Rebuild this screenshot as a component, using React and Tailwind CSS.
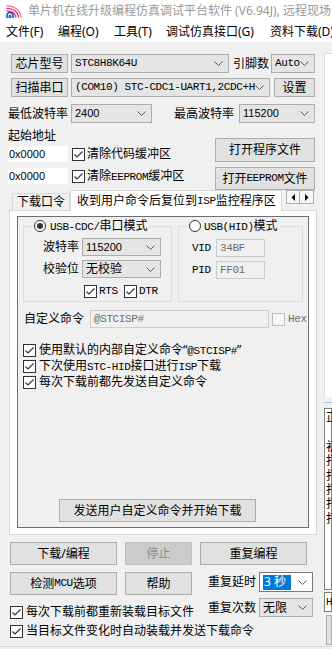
import React from "react";

const CJK = "font-['Noto_Sans','Noto_Sans_CJK_SC',sans-serif]";

function M({ children, className = "" }) {
  return (
    <span className={"font-['Liberation_Mono','Noto_Sans_CJK_SC',monospace] text-[11px] tracking-[-0.4px] " + className}>
      {children}
    </span>
  );
}

function S({ children, className = "" }) {
  return <span className={"font-['Liberation_Sans',sans-serif] text-[11px] " + className}>{children}</span>;
}

function Chev({ color = "#5a5a5a" }) {
  return (
    <svg width="9" height="5" viewBox="0 0 9 5" className="shrink-0">
      <path d="M0.5 0.5L4.5 4.5L8.5 0.5" fill="none" stroke={color} strokeWidth="1" />
    </svg>
  );
}

function Sel({ w, children, white }) {
  return (
    <div
      className={`${w} h-full shrink-0 flex items-center border pl-[3px] pr-[5px] ${
        white ? "bg-white border-[#7a7a7a]" : "bg-[#e5e5e5] border-[#acacac]"
      }`}
    >
      <div className="flex-1 min-w-0 overflow-hidden whitespace-nowrap flex items-center">{children}</div>
      <Chev />
    </div>
  );
}

function Btn({ w, h = "h-full", children, disabled }) {
  return (
    <div
      className={`${w} ${h} shrink-0 flex items-center justify-center border whitespace-nowrap ${
        disabled ? "bg-[#cccccc] border-[#bfbfbf] text-[#8a8a8a]" : "bg-[#e1e1e1] border-[#adadad]"
      }`}
    >
      {children}
    </div>
  );
}

function Check({ checked = true, disabled }) {
  return (
    <span
      className={`w-[13px] h-[13px] shrink-0 border flex items-center justify-center ${
        disabled ? "border-[#bcbcbc] bg-[#f7f7f7]" : "border-[#333333] bg-white"
      }`}
    >
      {checked && (
        <svg width="11" height="11" viewBox="0 0 11 11">
          <path d="M1.5 5.5L4 8L9.5 2.5" fill="none" stroke="#333333" strokeWidth="1.2" />
        </svg>
      )}
    </span>
  );
}

function Radio({ checked }) {
  return (
    <span className="w-[12px] h-[12px] shrink-0 rounded-full border border-[#333333] bg-white flex items-center justify-center">
      {checked && <span className="w-[6px] h-[6px] rounded-full bg-[#333333]" />}
    </span>
  );
}

function Logo() {
  return (
    <svg width="16" height="13" viewBox="0 0 16 13" className="shrink-0">
      <path d="M0.5 0.8A14 12 0 0 1 15 12.5" fill="none" stroke="#f06a8e" strokeWidth="1.3" />
      <path d="M0.5 3.3A11.5 9.5 0 0 1 12.5 12.5" fill="none" stroke="#e8305a" strokeWidth="1.3" />
      <path d="M0.5 5.8A9 7 0 0 1 10 12.5" fill="none" stroke="#e8305a" strokeWidth="1.3" />
      <path d="M1 13V10.5A3 3 0 0 1 7 10.5V13" fill="none" stroke="#1a4fd6" strokeWidth="1.6" />
      <path d="M3.2 13V11.3A0.8 0.8 0 0 1 4.8 11.3V13" fill="none" stroke="#1a4fd6" strokeWidth="1.3" />
    </svg>
  );
}

function CheckRow({ children, className = "" }) {
  return (
    <div className={"h-[16px] flex items-center whitespace-nowrap " + className}>
      <Check />
      <span className="ml-[3px]">{children}</span>
    </div>
  );
}

function RightStrip() {
  return (
    <div className="flex-1 min-w-0 flex flex-col pl-[2px] overflow-hidden">
      <div className="mt-[11px] h-[344px] shrink-0 bg-white border-l border-t border-[#dcdcdc]" />
      <div className="mt-[5px] h-[1px] shrink-0 bg-[#9fcbee]" />
      <div className="mt-[5px] h-[182px] shrink-0 bg-white border border-[#828282] pl-[1px] pt-[1px] whitespace-nowrap leading-[14.4px] text-[12px] font-['Noto_Sans_CJK_SC',sans-serif]">
        <div>正在检测目标单片机</div>
        <div>&nbsp;</div>
        <div>初始化</div>
        <div>打开</div>
        <div>打开</div>
        <div>打开</div>
        <div>打开</div>
        <div>打开</div>
      </div>
      <div className="mt-[2px] h-[20px] shrink-0 bg-white border border-[#7a7a7a] flex items-center pl-[1px]">
        <M>HEX</M>
      </div>
      <div className="mt-[3px] ml-[2px] h-[30px] shrink-0 bg-[#e1e1e1] border border-[#adadad]" />
    </div>
  );
}

export default function App() {
  return (
    <div className={`w-[332px] h-[649px] overflow-hidden bg-[#f0f0f0] flex flex-col text-[12px] text-black ${CJK}`}>
      {/* title bar */}
      <div className="h-[22px] shrink-0 bg-white flex items-center pl-[6px] whitespace-nowrap overflow-hidden">
        <Logo />
        <span className="ml-[6px] text-[#999999] text-[12px]">单片机在线升级编程仿真调试平台软件 (V6.94J), 远程现场</span>
      </div>
      {/* menu bar */}
      <div className="h-[20px] shrink-0 bg-white flex items-center pl-[6px] whitespace-nowrap overflow-hidden">
        <span className="w-[52px] shrink-0">文件(F)</span>
        <span className="w-[56px] shrink-0">编程(O)</span>
        <span className="w-[52px] shrink-0">工具(T)</span>
        <span className="w-[104px] shrink-0">调试仿真接口(G)</span>
        <span className="shrink-0">资料下载(D)</span>
      </div>

      <div className="flex flex-1 min-h-0">
        <div className="w-[322px] shrink-0 flex flex-col">
          {/* row 1 */}
          <div className="mt-[12px] h-[19px] flex items-center pl-[11px]">
            <Btn w="w-[57px]">芯片型号</Btn>
            <Sel w="w-[158px] ml-[3px]">
              <M>STC8H8K64U</M>
            </Sel>
            <span className="ml-[4px] w-[38px] shrink-0">引脚数</span>
            <Sel w="w-[44px]">
              <M>Auto</M>
            </Sel>
          </div>
          {/* row 2 */}
          <div className="mt-[5px] h-[19px] flex items-center pl-[11px]">
            <Btn w="w-[57px]">扫描串口</Btn>
            <Sel w="w-[199px] ml-[3px]">
              <M>(COM10) STC-CDC1-UART1,2CDC+HC</M>
            </Sel>
            <div className="ml-[4px] h-full flex">
              <Btn w="w-[41px]">设置</Btn>
            </div>
          </div>
          {/* row 3 */}
          <div className="mt-[7px] h-[19px] flex items-center pl-[8px]">
            <span className="w-[63px] shrink-0">最低波特率</span>
            <Sel w="w-[81px]">
              <S>2400</S>
            </Sel>
            <span className="ml-[22px] w-[65px] shrink-0">最高波特率</span>
            <Sel w="w-[76px]">
              <S>115200</S>
            </Sel>
          </div>
          {/* address block */}
          <div className="flex pl-[8px]">
            <div className="w-[207px] shrink-0 flex flex-col">
              <div className="mt-[5px] h-[16px] leading-[16px]">起始地址</div>
              <div className="mt-[2px] h-[16px] flex items-center whitespace-nowrap">
                <div className="w-[60px] h-full bg-white flex items-center pl-[1px]">
                  <S>0x0000</S>
                </div>
                <span className="ml-[4px]">
                  <Check />
                </span>
                <span className="ml-[2px]">清除代码缓冲区</span>
              </div>
              <div className="mt-[6px] h-[16px] flex items-center whitespace-nowrap">
                <div className="w-[60px] h-full bg-white flex items-center pl-[1px]">
                  <S>0x0000</S>
                </div>
                <span className="ml-[4px]">
                  <Check />
                </span>
                <span className="ml-[2px]">
                  清除<M>EEPROM</M>缓冲区
                </span>
              </div>
            </div>
            <div className="flex flex-col">
              <div className="mt-[15px] flex">
                <Btn w="w-[100px]" h="h-[24px]">打开程序文件</Btn>
              </div>
              <div className="mt-[5px] flex">
                <Btn w="w-[100px]" h="h-[23px]">
                  打开<M>EEPROM</M>文件
                </Btn>
              </div>
            </div>
          </div>
          {/* tabs */}
          <div className="h-[20px] flex items-end pl-[12px] relative z-10 whitespace-nowrap">
            <div className="w-[58px] h-[17px] shrink-0 bg-[#f0f0f0] border border-b-0 border-[#d9d9d9] flex items-center justify-center">
              下载口令
            </div>
            <div className="w-[212px] h-[21px] mb-[-1px] shrink-0 bg-white border border-b-0 border-[#d9d9d9] flex items-center pl-[6px]">
              收到用户命令后复位到<M>ISP</M>监控程序区
            </div>
            <div className="self-start ml-[4px] flex">
              <div className="w-[14px] h-[14px] border border-[#adadad] bg-[#f7f7f7] flex items-center justify-center">
                <svg width="4" height="7" viewBox="0 0 4 7">
                  <path d="M4 0L0.5 3.5L4 7Z" fill="#000" />
                </svg>
              </div>
              <div className="w-[14px] h-[14px] border border-l-0 border-[#adadad] bg-[#f7f7f7] flex items-center justify-center">
                <svg width="4" height="7" viewBox="0 0 4 7">
                  <path d="M0 0L3.5 3.5L0 7Z" fill="#000" />
                </svg>
              </div>
            </div>
          </div>
          {/* tab panel */}
          <div className="ml-[9px] w-[308px] h-[325px] shrink-0 bg-white border border-[#d9d9d9] flex flex-col">
            <div className="ml-[7px] mt-[5px] w-[292px] h-[312px] shrink-0 border border-[#6e6e6e] bg-[#f0f0f0] flex flex-col">
              <div className="mt-[2px] flex pl-[5px]">
                <fieldset className="w-[149px] h-[83px] shrink-0 border border-[#dcdcdc]">
                  <legend className="ml-[9px] px-[1px]">
                    <span className="flex items-center gap-[4px] h-[14px] whitespace-nowrap">
                      <Radio checked />
                      <span>
                        <M>USB-CDC/</M>串口模式
                      </span>
                    </span>
                  </legend>
                  <div className="mt-[5px] h-[18px] flex items-center">
                    <span className="w-[55px] shrink-0 text-right">波特率</span>
                    <Sel w="w-[79px] ml-[3px]">
                      <S>115200</S>
                    </Sel>
                  </div>
                  <div className="mt-[4px] h-[18px] flex items-center">
                    <span className="w-[55px] shrink-0 text-right">校验位</span>
                    <Sel w="w-[79px] ml-[3px]">
                      <span>无校验</span>
                    </Sel>
                  </div>
                  <div className="mt-[7px] h-[13px] flex items-center pl-[60px]">
                    <Check />
                    <M className="ml-[2px] w-[25px]">RTS</M>
                    <Check />
                    <M className="ml-[2px]">DTR</M>
                  </div>
                </fieldset>
                <fieldset className="ml-[6px] w-[125px] h-[83px] shrink-0 border border-[#dcdcdc]">
                  <legend className="ml-[9px] px-[1px]">
                    <span className="flex items-center gap-[3px] h-[14px] whitespace-nowrap">
                      <Radio />
                      <span>
                        <M>USB(HID)</M>模式
                      </span>
                    </span>
                  </legend>
                  <div className="mt-[6px] h-[18px] flex items-center">
                    <M className="ml-[13px] w-[24px] shrink-0">VID</M>
                    <div className="w-[49px] h-full border border-[#cccccc] bg-[#f0f0f0] flex items-center pl-[3px]">
                      <M className="text-[#6d6d6d]">34BF</M>
                    </div>
                  </div>
                  <div className="mt-[4px] h-[18px] flex items-center">
                    <M className="ml-[13px] w-[24px] shrink-0">PID</M>
                    <div className="w-[49px] h-full border border-[#cccccc] bg-[#f0f0f0] flex items-center pl-[3px]">
                      <M className="text-[#6d6d6d]">FF01</M>
                    </div>
                  </div>
                </fieldset>
              </div>
              {/* custom command */}
              <div className="mt-[8px] h-[18px] flex items-center pl-[6px] whitespace-nowrap">
                <span className="w-[66px] shrink-0">自定义命令</span>
                <div className="w-[179px] h-full shrink-0 border border-[#cccccc] bg-[#f0f0f0] flex items-center pl-[3px]">
                  <M className="text-[#6d6d6d]">@STCISP#</M>
                </div>
                <span className="ml-[3px]">
                  <Check checked={false} disabled />
                </span>
                <M className="ml-[3px] text-[#6d6d6d]">Hex</M>
              </div>
              <div className="mt-[14px] pl-[5px] flex flex-col">
                <CheckRow>
                  使用默认的内部自定义命令“<M>@STCISP#</M>”
                </CheckRow>
                <CheckRow>
                  下次使用<M>STC-HID</M>接口进行<M>ISP</M>下载
                </CheckRow>
                <CheckRow>每次下载前都先发送自定义命令</CheckRow>
              </div>
              <div className="mt-auto mb-[5px] ml-[41px] flex">
                <Btn w="w-[197px]" h="h-[23px]">发送用户自定义命令并开始下载</Btn>
              </div>
            </div>
          </div>
          {/* bottom buttons */}
          <div className="mt-[7px] h-[23px] flex pl-[10px]">
            <Btn w="w-[107px]">下载/编程</Btn>
            <div className="ml-[8px] flex">
              <Btn w="w-[67px]" disabled>
                停止
              </Btn>
            </div>
            <div className="ml-[8px] flex">
              <Btn w="w-[107px]">重复编程</Btn>
            </div>
          </div>
          <div className="mt-[7px] flex">
            <div className="w-[198px] shrink-0 flex flex-col pl-[10px]">
              <div className="h-[23px] flex">
                <Btn w="w-[107px]">
                  检测<M>MCU</M>选项
                </Btn>
                <div className="ml-[8px] flex">
                  <Btn w="w-[67px]">帮助</Btn>
                </div>
              </div>
              <CheckRow className="mt-[9px]">每次下载前都重新装载目标文件</CheckRow>
              <CheckRow className="mt-[3px]">当目标文件变化时自动装载并发送下载命令</CheckRow>
            </div>
            <div className="flex flex-col">
              <div className="h-[20px] flex items-center">
                <span className="ml-[10px] w-[51px] shrink-0">重复延时</span>
                <Sel w="w-[54px]" white>
                  <span className="bg-[#0078d7] text-white w-[28px] h-[15px] flex items-center pl-[1px]">3 秒</span>
                </Sel>
              </div>
              <div className="mt-[6px] h-[19px] flex items-center">
                <span className="ml-[10px] w-[51px] shrink-0">重复次数</span>
                <Sel w="w-[54px]">
                  <span>无限</span>
                </Sel>
              </div>
            </div>
          </div>
        </div>
        <RightStrip />
      </div>
      <div className="h-[3px] shrink-0 border-t border-[#dadada]" />
    </div>
  );
}
